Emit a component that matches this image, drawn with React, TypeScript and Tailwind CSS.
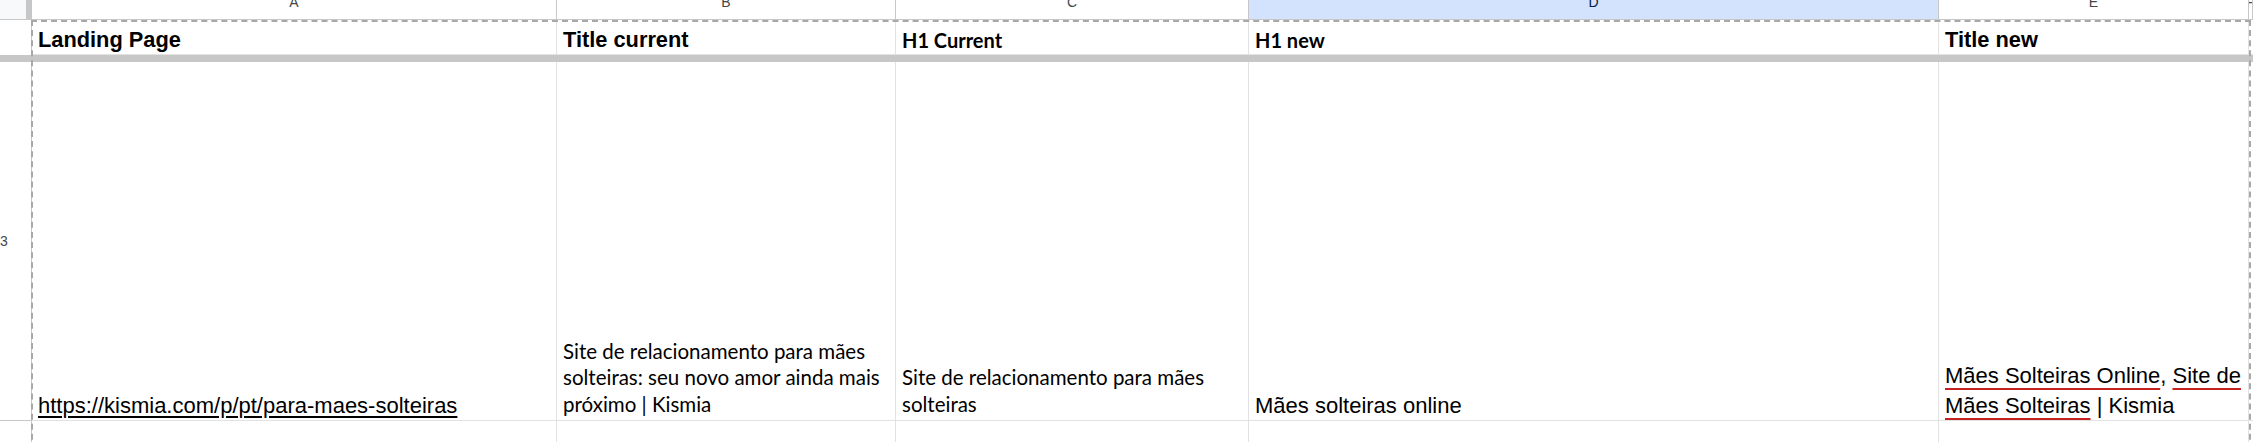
import React from "react";

const arial = { fontFamily: '"Liberation Sans", Arial, sans-serif' };
const calibri = { fontFamily: 'Lato, "Noto Sans", sans-serif' };

const gridCols =
  "grid grid-cols-[32px_525px_339px_353px_690px_310px_1fr]";

function ColHead({ letter, active }: { letter: string; active?: boolean }) {
  return (
    <div
      className={
        "h-[20px] overflow-hidden border-r border-b border-[#c7c7c7] flex justify-center " +
        (active ? "bg-[#d3e3fd] text-[#041e49]" : "bg-white text-[#444746]")
      }
    >
      <span className="-mt-[5px] text-[14px] leading-none" style={arial}>
        {letter}
      </span>
    </div>
  );
}

function HeadCell({
  children,
  font = "arial",
}: {
  children: React.ReactNode;
  font?: "arial" | "calibri";
}) {
  return (
    <div
      className="h-[35px] border-r border-b border-[#e2e2e3] flex items-end px-[6px] pb-[1px] overflow-hidden"
      style={font === "arial" ? arial : calibri}
    >
      <span
        className={
          "font-bold whitespace-nowrap text-black " +
          (font === "arial" ? "text-[21.8px] leading-[26px]" : "text-[20px] leading-[26px]")
        }
      >
        {children}
      </span>
    </div>
  );
}

function Cell({ children, className = "pb-[3px]" }: { children?: React.ReactNode; className?: string }) {
  return (
    <div
      className={
        "border-r border-b border-[#e2e2e3] flex items-end px-[6px] overflow-hidden " +
        className
      }
    >
      {children}
    </div>
  );
}

const spell = "underline decoration-[#c5221f] decoration-2 underline-offset-[5px]";

export default function App() {
  return (
    <div className="relative w-[2253px] h-[442px] overflow-hidden bg-white">
      {/* column letters */}
      <div className={gridCols}>
        <div className="h-[20px] flex border-b border-[#c7c7c7]">
          <div className="w-[26px] bg-[#f8f9fa]" />
          <div className="w-[6px] bg-[#c7c7c7]" />
        </div>
        <ColHead letter="A" />
        <ColHead letter="B" />
        <ColHead letter="C" />
        <ColHead letter="D" active />
        <ColHead letter="E" />
        <ColHead letter="F" />
      </div>

      {/* header row */}
      <div className={gridCols}>
        <div className="h-[35px] border-r border-[#c7c7c7] bg-white" />
        <HeadCell>Landing Page</HeadCell>
        <HeadCell>Title current</HeadCell>
        <HeadCell font="calibri">H1 Current</HeadCell>
        <HeadCell font="calibri">H1 new</HeadCell>
        <HeadCell>Title new</HeadCell>
        <HeadCell>{""}</HeadCell>
      </div>

      {/* frozen divider */}
      <div className="h-[7px] bg-[#c7c7c7]" />

      {/* row 3 */}
      <div className={gridCols + " h-[359px]"}>
        <div className="border-r border-b border-[#c7c7c7] flex items-center overflow-hidden">
          <span className="text-[14px] text-[#444746] leading-none" style={arial}>
            3
          </span>
        </div>
        <Cell className="pb-0">
          <a
            className="text-black underline underline-offset-[3px] text-[22px] leading-[28px] whitespace-nowrap"
            style={arial}
          >
            https://kismia.com/p/pt/para-maes-solteiras
          </a>
        </Cell>
        <Cell>
          <p className="text-black text-[20.5px] leading-[26.5px] whitespace-nowrap" style={calibri}>
            Site de relacionamento para mães
            <br />
            solteiras: seu novo amor ainda mais
            <br />
            próximo | Kismia
          </p>
        </Cell>
        <Cell>
          <p className="text-black text-[20.5px] leading-[26.5px] whitespace-nowrap" style={calibri}>
            Site de relacionamento para mães
            <br />
            solteiras
          </p>
        </Cell>
        <Cell className="pb-0">
          <p className="text-black text-[22px] leading-[28px]" style={arial}>
            Mães solteiras online
          </p>
        </Cell>
        <Cell className="pb-0">
          <p className="text-black text-[22px] leading-[29.5px] whitespace-nowrap" style={arial}>
            <span className={spell}>Mães Solteiras Online</span>,{" "}
            <span className={spell}>Site de</span>
            <br />
            <span className={spell}>Mães Solteiras</span> | Kismia
          </p>
        </Cell>
        <Cell />
      </div>

      {/* row 4 */}
      <div className={gridCols + " h-[40px]"}>
        <div className="border-r border-[#c7c7c7]" />
        <div className="border-r border-[#e2e2e3]" />
        <div className="border-r border-[#e2e2e3]" />
        <div className="border-r border-[#e2e2e3]" />
        <div className="border-r border-[#e2e2e3]" />
        <div className="border-r border-[#e2e2e3]" />
        <div />
      </div>

      {/* copy selection marquee */}
      <div className="pointer-events-none absolute left-[31px] top-[20px] w-[2220px] h-[440px] border-2 border-dashed border-[#a8a8a8]" />
    </div>
  );
}
